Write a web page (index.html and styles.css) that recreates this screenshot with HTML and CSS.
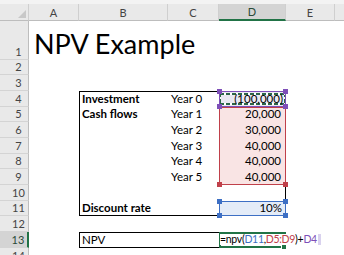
FILE: index.html
```html
<!DOCTYPE html>
<html>
<head>
<meta charset="utf-8">
<link rel="stylesheet" href="styles.css">
</head>
<body>
<div class="sheet">
  <div class="strip"></div>

  <div class="hdr corner"><span class="tri"></span></div>
  <div class="hdr col">A</div>
  <div class="hdr col">B</div>
  <div class="hdr col">C</div>
  <div class="hdr col sel-col">D</div>
  <div class="hdr col">E</div>
  <div class="hdr col tail"></div>

  <div class="hdr row r1">1</div>
  <div class="hdr row r2">2</div>
  <div class="hdr row r3">3</div>
  <div class="hdr row r4">4</div>
  <div class="hdr row r5">5</div>
  <div class="hdr row r6">6</div>
  <div class="hdr row r7">7</div>
  <div class="hdr row r8">8</div>
  <div class="hdr row r9">9</div>
  <div class="hdr row r10">10</div>
  <div class="hdr row r11">11</div>
  <div class="hdr row r12">12</div>
  <div class="hdr row r13 sel-row">13</div>
  <div class="hdr row r14">14</div>

  <div class="title">NPV Example</div>

  <div class="box-main"></div>
  <div class="box-npv"></div>

  <div class="cell b r4 bold">Investment</div>
  <div class="cell b r5 bold">Cash flows</div>
  <div class="cell b r11 bold">Discount rate</div>
  <div class="cell b r13">NPV</div>

  <div class="cell c r4">Year 0</div>
  <div class="cell c r5">Year 1</div>
  <div class="cell c r6">Year 2</div>
  <div class="cell c r7">Year 3</div>
  <div class="cell c r8">Year 4</div>
  <div class="cell c r9">Year 5</div>

  <div class="ref ref-red"><i class="h bl"></i><i class="h br"></i></div>
  <div class="ref ref-purple"><span class="ants"></span><i class="h tl"></i><i class="h tr"></i><i class="h bl"></i><i class="h br"></i></div>
  <div class="ref ref-blue"><i class="h tl"></i><i class="h tr"></i><i class="h bl"></i><i class="h br"></i></div>

  <div class="cell d r4 num neg">(100,000)</div>
  <div class="cell d r5 num">20,000</div>
  <div class="cell d r6 num">30,000</div>
  <div class="cell d r7 num">40,000</div>
  <div class="cell d r8 num">40,000</div>
  <div class="cell d r9 num">40,000</div>
  <div class="cell d r11 num pct">10%</div>

  <div class="edit-box"><i class="fill-handle"></i></div>
  <div class="edit"><span class="k">=npv(</span><span class="fb">D11</span><span class="k">,</span><span class="fr">D5:D9</span><span class="k">)+</span><span class="fp">D4</span><span class="caret"></span></div>
</div>
</body>
</html>
```
FILE: styles.css
```css
html, body {
  margin: 0;
  padding: 0;
  background: #ffffff;
  overflow: hidden;
}
.sheet {
  width: 344px;
  height: 255px;
  display: grid;
  grid-template-columns: 29px 50px 89px 51px 67px 49px 1fr;
  grid-template-rows: 4px 17px 38.7px repeat(12, 15.67px) 1fr;
  font-family: Lato, "Open Sans", sans-serif;
  font-size: 11.5px;
  color: #000;
  position: relative;
  overflow: hidden;
}
.strip {
  grid-column: 1 / -1;
  grid-row: 1;
  background: #f3f3f3;
}
.hdr {
  background: #e9e9e9;
  color: #444;
  font-size: 11px;
  box-sizing: border-box;
  display: flex;
  align-items: center;
  justify-content: center;
}
.corner {
  grid-column: 1;
  grid-row: 2;
  border-right: 1px solid #cfcfcf;
  border-bottom: 1px solid #bdbdbd;
  position: relative;
}
.tri {
  position: absolute;
  right: 2px;
  bottom: 2px;
  width: 0;
  height: 0;
  border-left: 8px solid transparent;
  border-bottom: 8px solid #c8c8c8;
}
.col {
  grid-row: 2;
  border-right: 1px solid #cfcfcf;
  border-bottom: 1px solid #bdbdbd;
}
.tail {
  border-right: none;
}
.sel-col {
  background: #d4d4d4;
  color: #2a4a38;
  border-bottom: 2px solid #217346;
}
.row {
  grid-column: 1;
  border-right: 1px solid #bdbdbd;
  border-bottom: 1px solid #d4d4d4;
  align-items: flex-end;
  padding-bottom: 1px;
  padding-left: 9px;
}
.sel-row {
  background: #d4d4d4;
  color: #2a4a38;
  border-right: 2px solid #217346;
}
.r1 { grid-row: 3; }
.r2 { grid-row: 4; }
.r3 { grid-row: 5; }
.r4 { grid-row: 6; }
.r5 { grid-row: 7; }
.r6 { grid-row: 8; }
.r7 { grid-row: 9; }
.r8 { grid-row: 10; }
.r9 { grid-row: 11; }
.r10 { grid-row: 12; }
.r11 { grid-row: 13; }
.r12 { grid-row: 14; }
.r13 { grid-row: 15; }
.r14 { grid-row: 16; align-items: flex-start; padding-top: 1px; }

.title {
  grid-column: 2 / 6;
  grid-row: 3;
  font-size: 27px;
  line-height: 1;
  align-self: end;
  padding-left: 5px;
  padding-bottom: 3px;
  white-space: nowrap;
}
.cell {
  position: relative;
  align-self: end;
  line-height: 14px;
  white-space: nowrap;
  padding: 0 3px 1px 3px;
}
.b { grid-column: 3; }
.c { grid-column: 4; }
.d { grid-column: 5; }
.bold { font-weight: bold; }
.num { text-align: right; padding-right: 5px; }
.num.neg { padding-right: 3px; }
.num.pct { padding-right: 4px; }

.box-main {
  grid-column: 3 / 6;
  grid-row: 6 / 14;
  border: 1px solid #000;
}
.box-npv {
  grid-column: 3 / 6;
  grid-row: 15;
  border: 1px solid #000;
}

.ref {
  position: relative;
  box-sizing: border-box;
}
.ref-purple {
  grid-column: 5;
  grid-row: 6;
  border: 1px solid #7e4fb8;
  background: #e9e9f2;
}
.ref-red {
  grid-column: 5;
  grid-row: 7 / 12;
  border: 1px solid #c0404a;
  background: #f9e4e4;
}
.ref-blue {
  grid-column: 5;
  grid-row: 13;
  border: 1px solid #3d6fc4;
  background: #e4ecf8;
}
.h {
  position: absolute;
  width: 5px;
  height: 5px;
}
.ref-purple .h { background: #7e4fb8; }
.ref-red .h { background: #c0404a; }
.ref-blue .h { background: #3d6fc4; }
.h.tl { left: -3px; top: -3px; }
.h.tr { right: -3px; top: -3px; }
.h.bl { left: -3px; bottom: -3px; }
.h.br { right: -3px; bottom: -3px; }
.ants {
  position: absolute;
  left: 0;
  right: 0;
  top: 1px;
  bottom: 1px;
  background:
    repeating-linear-gradient(90deg, #2b6548 0 4px, #ffffff 4px 6px) top left / 100% 2px no-repeat,
    repeating-linear-gradient(90deg, #2b6548 0 4px, #ffffff 4px 6px) bottom left / 100% 2px no-repeat,
    repeating-linear-gradient(180deg, #2b6548 0 4px, #ffffff 4px 6px) top left / 1px 100% no-repeat,
    repeating-linear-gradient(180deg, #2b6548 0 4px, #ffffff 4px 6px) top right / 1px 100% no-repeat;
}

.edit-box {
  grid-column: 5;
  grid-row: 15;
  position: relative;
  box-sizing: border-box;
  border: 2px solid #217346;
  background: #fff;
}
.fill-handle {
  position: absolute;
  right: -3px;
  bottom: -4px;
  width: 4px;
  height: 4px;
  background: #217346;
  border: 1px solid #fff;
}
.edit {
  grid-column: 5 / 7;
  grid-row: 15;
  position: relative;
  align-self: center;
  justify-self: start;
  margin-left: 1px;
  padding-right: 1px;
  line-height: 11px;
  font-size: 10.5px;
  letter-spacing: -0.3px;
  white-space: nowrap;
  display: flex;
  align-items: center;
  background: #fff;
}
.k { color: #000; }
.fb { color: #3d6fc4; }
.fr { color: #c0404a; }
.fp { color: #7e4fb8; }
.caret {
  display: inline-block;
  width: 3px;
  height: 11px;
  margin-left: 1px;
  background: #d9d2ee;
}
```
